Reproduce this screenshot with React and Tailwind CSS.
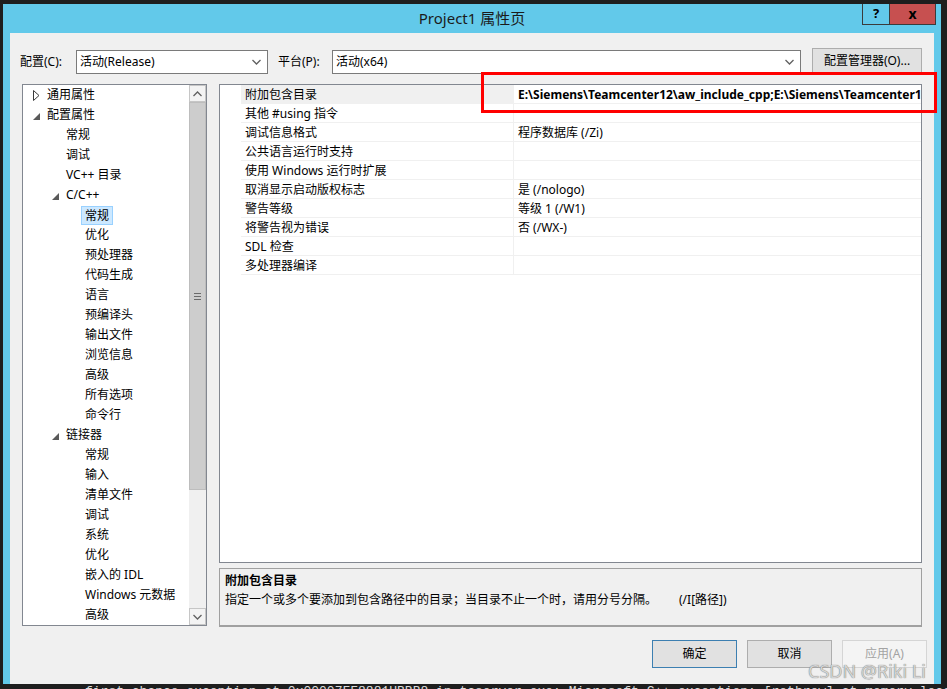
import React from 'react';

const tree = [
  { t: '通用属性', lv: 0, exp: 'closed' },
  { t: '配置属性', lv: 0, exp: 'open' },
  { t: '常规', lv: 1 },
  { t: '调试', lv: 1 },
  { t: 'VC++ 目录', lv: 1 },
  { t: 'C/C++', lv: 1, exp: 'open' },
  { t: '常规', lv: 2, sel: true },
  { t: '优化', lv: 2 },
  { t: '预处理器', lv: 2 },
  { t: '代码生成', lv: 2 },
  { t: '语言', lv: 2 },
  { t: '预编译头', lv: 2 },
  { t: '输出文件', lv: 2 },
  { t: '浏览信息', lv: 2 },
  { t: '高级', lv: 2 },
  { t: '所有选项', lv: 2 },
  { t: '命令行', lv: 2 },
  { t: '链接器', lv: 1, exp: 'open' },
  { t: '常规', lv: 2 },
  { t: '输入', lv: 2 },
  { t: '清单文件', lv: 2 },
  { t: '调试', lv: 2 },
  { t: '系统', lv: 2 },
  { t: '优化', lv: 2 },
  { t: '嵌入的 IDL', lv: 2 },
  { t: 'Windows 元数据', lv: 2 },
  { t: '高级', lv: 2 },
];

const indent = ['pl-[10px]', 'pl-[29px]', 'pl-[48px]'];

const props = [
  ['附加包含目录', 'E:\\Siemens\\Teamcenter12\\aw_include_cpp;E:\\Siemens\\Teamcenter12\\include;E:\\Siemens\\Teamcenter12\\include_cpp;%(AdditionalIncludeDirectories)', true],
  ['其他 #using 指令', ''],
  ['调试信息格式', '程序数据库 (/Zi)'],
  ['公共语言运行时支持', ''],
  ['使用 Windows 运行时扩展', ''],
  ['取消显示启动版权标志', '是 (/nologo)'],
  ['警告等级', '等级 1 (/W1)'],
  ['将警告视为错误', '否 (/WX-)'],
  ['SDL 检查', ''],
  ['多处理器编译', ''],
];

function Chevron({ up }) {
  return (
    <svg width="9" height="6" viewBox="0 0 9 6">
      <path
        d={up ? 'M0.5 5 L4.5 1 L8.5 5' : 'M0.5 1 L4.5 5 L8.5 1'}
        fill="none"
        stroke="#606060"
        strokeWidth="1.3"
      />
    </svg>
  );
}

function Expander({ exp }) {
  if (exp === 'closed')
    return (
      <svg width="7" height="11" viewBox="0 0 7 11">
        <path d="M0.5 0.5 L6 5.5 L0.5 10.5 Z" fill="none" stroke="#3a3a3a" strokeWidth="1" />
      </svg>
    );
  if (exp === 'open')
    return (
      <svg width="7" height="7" viewBox="0 0 7 7" className="mt-[3px]">
        <polygon points="7,0 7,7 0,7" fill="#595959" />
      </svg>
    );
  return null;
}

function Combo({ text, w }) {
  return (
    <div className={`${w} h-[24px] bg-white border border-[#7a7a7a] flex items-center pl-[3px] pr-[6px]`}>
      <span className="flex-1 text-[12px] text-black">{text}</span>
      <Chevron />
    </div>
  );
}

export default function App() {
  return (
    <div className="w-[947px] h-[689px] bg-[#1e1e1e] relative overflow-hidden pt-[4px] pl-[3px] font-['Noto_Sans','Noto_Sans_CJK_SC',sans-serif] text-black">
      {/* window */}
      <div className="w-[938px] h-[680px] bg-[#62c9ea] flex flex-col">
        {/* title bar */}
        <div className="h-[29px] grid grid-cols-[1fr_auto_1fr]">
          <div />
          <div className="text-[15px] leading-[29px] text-[#1b1b1b]">Project1 属性页</div>
          <div className="flex justify-end items-start pr-[5px]">
            <div className="w-[27px] h-[21px] border-l border-b border-[#3b3b3b] flex items-center justify-center text-[13px] font-bold text-black">?</div>
            <div className="w-[47px] h-[21px] bg-[#c75050] border-l border-b border-r border-[#3b3b3b] flex items-center justify-center text-[14px] font-bold text-black leading-none">x</div>
          </div>
        </div>

        {/* client */}
        <div className="mx-[7px] flex-1 bg-[#f0f0f0] flex flex-col">
          {/* config row */}
          <div className="mt-[17px] h-[24px] flex items-center pl-[10px] text-[12px]">
            <span className="w-[56px]">配置(C):</span>
            <Combo text="活动(Release)" w="w-[192px]" />
            <span className="ml-[10px] w-[54px]">平台(P):</span>
            <Combo text="活动(x64)" w="w-[469px]" />
            <button className="ml-[11px] w-[110px] h-[26px] -mt-[2px] bg-[#e1e1e1] border border-[#adadad] text-[12px] text-black">
              配置管理器(O)...
            </button>
          </div>

          {/* body */}
          <div className="mt-[10px] flex pl-[12px] gap-[12px]">
            {/* tree */}
            <div className="w-[185px] h-[542px] bg-white border border-[#828790] flex">
              <div className="flex-1 overflow-hidden">
                {tree.map((n, i) => (
                  <div key={i} className={`h-[20px] flex items-center ${indent[n.lv]} text-[12px] whitespace-nowrap`}>
                    <span className="w-[14px] flex items-center">
                      <Expander exp={n.exp} />
                    </span>
                    {n.sel ? (
                      <span className="-ml-[4px] px-[3px] h-[19px] leading-[17px] bg-[#cce8ff] border border-[#99d1ff]">{n.t}</span>
                    ) : (
                      <span>{n.t}</span>
                    )}
                  </div>
                ))}
              </div>
              {/* scrollbar */}
              <div className="w-[17px] bg-[#f0f0f0] flex flex-col">
                <div className="h-[17px] border border-[#c6c6c6] bg-[#f3f3f3] flex items-center justify-center">
                  <Chevron up />
                </div>
                <div className="h-[388px] bg-[#cdcdcd] border border-[#bdbdbd] flex items-center justify-center">
                  <div className="flex flex-col gap-[2px]">
                    <div className="w-[7px] h-px bg-[#6a6a6a]" />
                    <div className="w-[7px] h-px bg-[#6a6a6a]" />
                    <div className="w-[7px] h-px bg-[#6a6a6a]" />
                  </div>
                </div>
                <div className="flex-1" />
                <div className="h-[17px] border border-[#c6c6c6] bg-[#f3f3f3] flex items-center justify-center">
                  <Chevron />
                </div>
              </div>
            </div>

            {/* right column */}
            <div className="w-[703px] flex flex-col gap-[5px]">
              <div className="h-[479px] bg-white border border-[#828790] pl-[21px] overflow-hidden">
                {props.map(([name, val, bold], i) => (
                  <div key={i} className="h-[19px] flex border-b border-[#f0f0f0] text-[12px] leading-[19px]">
                    <div className={`w-[273px] pl-[4px] border-r border-[#f0f0f0] whitespace-nowrap ${i === 0 ? 'bg-[#f0f0f0]' : ''}`}>{name}</div>
                    <div className={`flex-1 pl-[4px] overflow-hidden whitespace-nowrap ${bold ? 'font-bold' : ''}`}>{val}</div>
                  </div>
                ))}
              </div>
              <div className="h-[59px] border border-[#a0a0a0] border-b-2 pl-[5px] pt-[2px] text-[12px]">
                <div className="font-bold leading-[19px]">附加包含目录</div>
                <div className="leading-[19px] whitespace-nowrap">
                  指定一个或多个要添加到包含路径中的目录；当目录不止一个时，请用分号分隔。
                  <span className="ml-[22px]">(/I[路径])</span>
                </div>
              </div>
            </div>
          </div>

          {/* buttons */}
          <div className="mt-[13px] flex justify-end gap-[10px] pr-[7px] text-[12px]">
            <button className="w-[85px] h-[28px] bg-[#e1e1e1] border border-[#3c7fb1] text-black">确定</button>
            <button className="w-[85px] h-[28px] bg-[#e1e1e1] border border-[#adadad] text-black">取消</button>
            <button className="w-[85px] h-[28px] bg-[#f4f4f4] border border-[#d5d5d5] text-[#a3a3a3]">应用(A)</button>
          </div>
        </div>
      </div>

      {/* console text below window */}
      <div className="h-[5px] overflow-hidden pl-[82px]">
        <div className="font-['Liberation_Mono',monospace] text-[13px] leading-[15px] text-[#dcdcdc] whitespace-nowrap">
          first-chance exception at 0x00007FF8881UBBB8 in tcserver.exe: Microsoft C++ exception: [rethrow] at memory location 0x0000000000000000.
        </div>
      </div>

      {/* red highlight */}
      <div className="absolute left-[481px] top-[72px] w-[456px] h-[41px] border-[3px] border-[#ff0000]" />

      {/* watermark */}
      <div className="absolute left-[808px] top-[658px] text-[18px] text-[#d4d4d4] [text-shadow:0_0_1px_#555] whitespace-nowrap">
        CSDN @Riki Li
      </div>
    </div>
  );
}
